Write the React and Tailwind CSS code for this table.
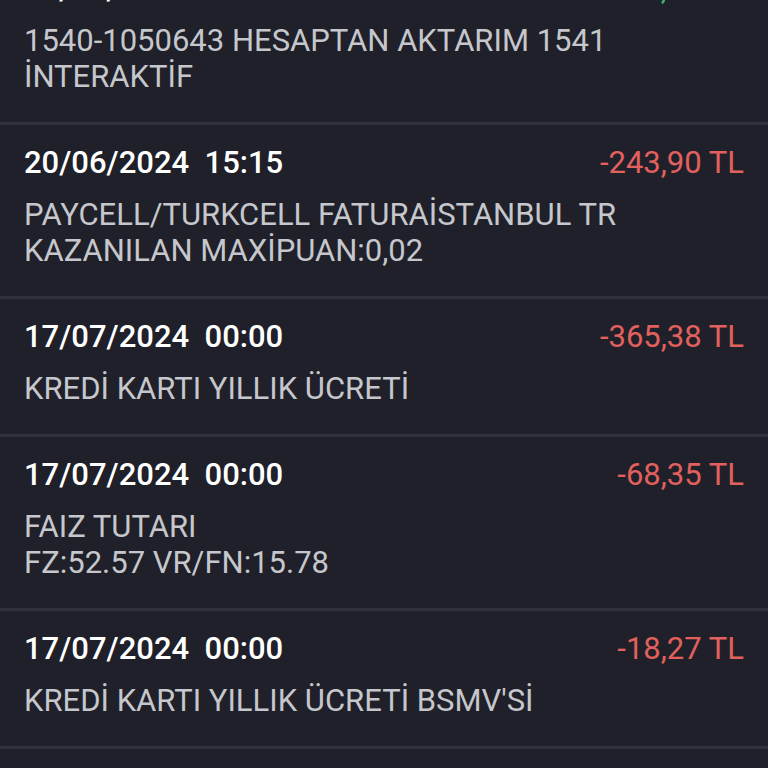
import React from "react";

const rows = [
  {
    date: "19/06/2024  10:42",
    amount: "+250,00 TL",
    positive: true,
    lines: ["1540-1050643 HESAPTAN AKTARIM 1541", "İNTERAKTİF"],
  },
  {
    date: "20/06/2024  15:15",
    amount: "-243,90 TL",
    lines: ["PAYCELL/TURKCELL FATURAİSTANBUL TR", "KAZANILAN MAXİPUAN:0,02"],
  },
  {
    date: "17/07/2024  00:00",
    amount: "-365,38 TL",
    lines: ["KREDİ KARTI YILLIK ÜCRETİ"],
  },
  {
    date: "17/07/2024  00:00",
    amount: "-68,35 TL",
    lines: ["FAIZ TUTARI", "FZ:52.57 VR/FN:15.78"],
  },
  {
    date: "17/07/2024  00:00",
    amount: "-18,27 TL",
    lines: ["KREDİ KARTI YILLIK ÜCRETİ BSMV'Sİ"],
  },
];

function Row({ row }) {
  return (
    <div className="border-b-[3px] border-[#2f323c] px-6 pt-[22px] pb-[27px]">
      <div className="flex items-center justify-between h-[32px]">
        <span className="text-[31px] font-medium text-white whitespace-pre">{row.date}</span>
        <span className={"text-[31px] " + (row.positive ? "text-[#3fb37a]" : "text-[#e2605e]")}>
          {row.amount}
        </span>
      </div>
      <div className="mt-[18px] text-[31px] leading-[36px] text-[#c6c7cc]">
        {row.lines.map((l, i) => (
          <div key={i}>{l}</div>
        ))}
      </div>
    </div>
  );
}

export default function App() {
  return (
    <div
      className="w-[768px] h-[768px] overflow-hidden bg-[#1f2029]"
      style={{ fontFamily: "Roboto, 'Noto Sans', sans-serif" }}
    >
      <div className="-mt-[49px]">
        {rows.map((r, i) => (
          <Row key={i} row={r} />
        ))}
      </div>
    </div>
  );
}
